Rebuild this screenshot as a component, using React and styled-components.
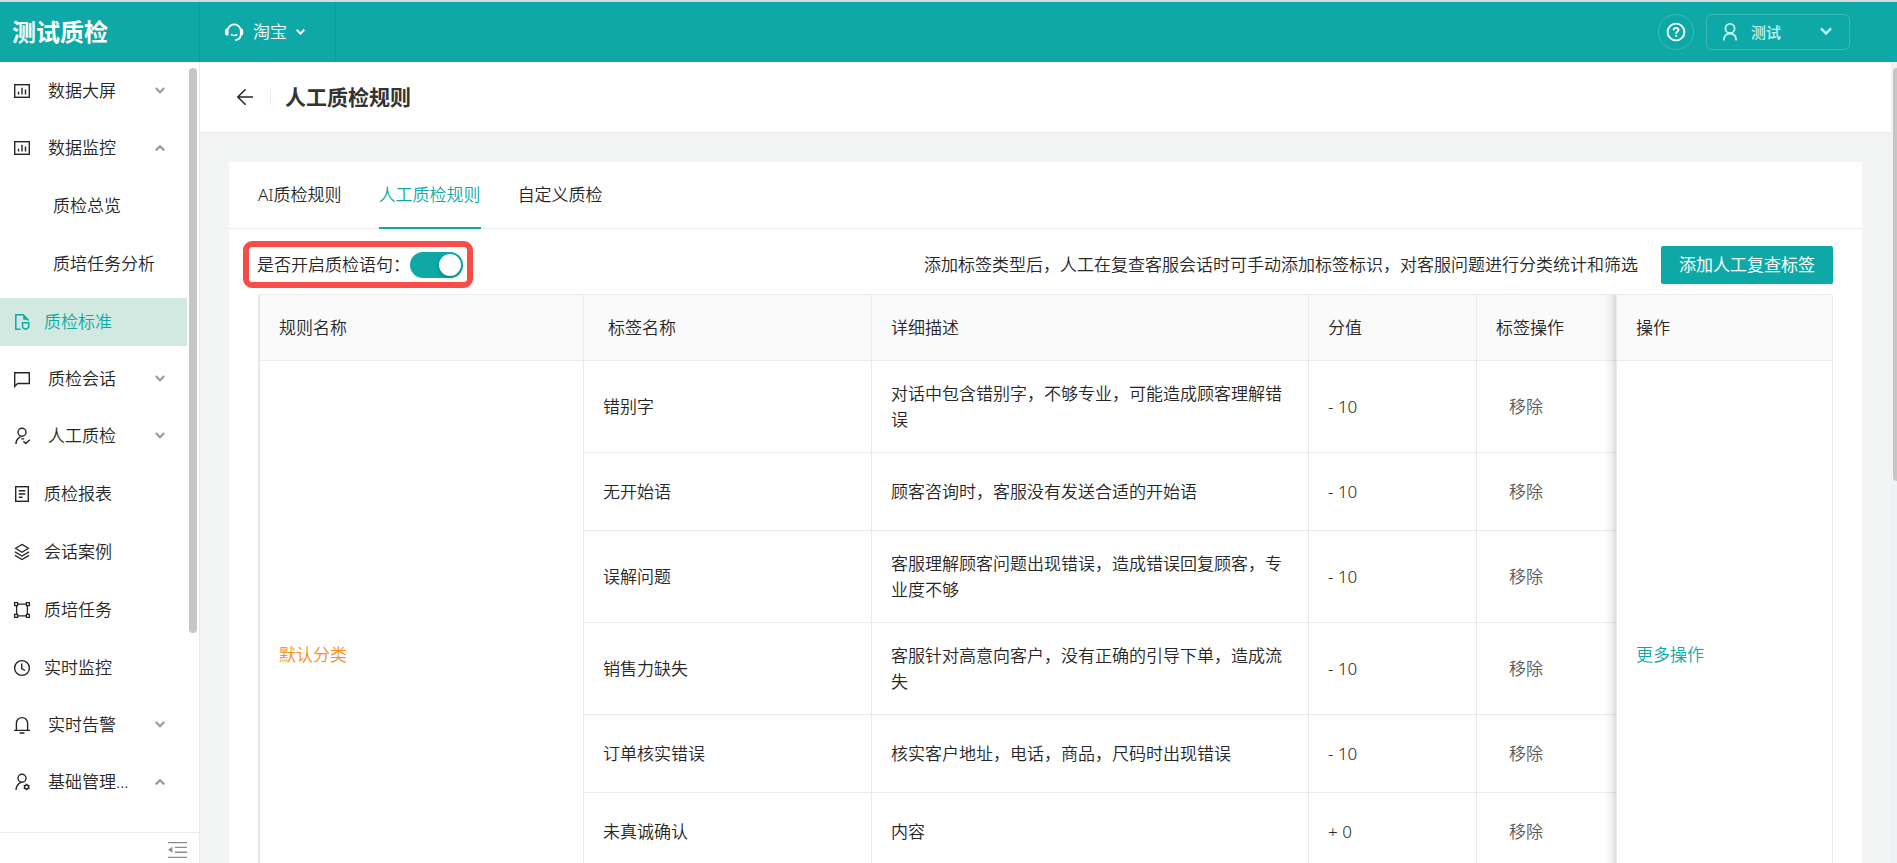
import React, { useState } from 'react';
import styled, { createGlobalStyle, css } from 'styled-components';

const colors = {
    PRIMARY: '#0ea9a7',
    PRIMARY_DARK: '#0c9c9a',
    PRIMARY_LIGHT: '#d2e9e2',
    HEADER_LINE: '#3dbab8',
    HEADER_TEXT: '#bdf5f2',
    TEXT: '#262626',
    TEXT_MUTED: '#595959',
    BORDER: '#ebebeb',
    TABLE_HEAD: '#fafafa',
    PAGE: '#f3f5f5',
    SCROLLBAR: '#c6c6c6',
    CHEVRON: '#9b9b9b',
    WARNING: '#fa8c16',
    HIGHLIGHT: '#f74c48',
    WHITE: '#ffffff',
};

const GlobalStyle = createGlobalStyle`
    *, *::before, *::after {
        box-sizing: border-box;
    }
    body {
        margin: 0;
        background: ${colors.PAGE};
        color: ${colors.TEXT};
        font-family: "Noto Sans", "Noto Sans CJK SC", sans-serif;
        font-size: 17px;
        font-weight: 350;
        line-height: 26px;
    }
    button {
        margin: 0;
        padding: 0;
        border: 0;
        background: none;
        color: inherit;
        font: inherit;
        cursor: pointer;
    }
    a {
        color: inherit;
        text-decoration: none;
    }
    svg {
        display: block;
        flex: none;
    }
`;

/* Icons */

const Svg = ({ width = 18, height = 18, stroke = 1.4, box, children }) => (
    <svg
        width={width}
        height={height}
        viewBox={box || `0 0 ${width} ${height}`}
        fill="none"
        stroke="currentColor"
        strokeWidth={stroke}
        aria-hidden="true"
    >
        {children}
    </svg>
);

const ChartIcon = () => (
    <Svg>
        <rect x="1.7" y="2.7" width="14.6" height="12.6" />
        <path d="M5.5 12.5V9.8M9 12.5V5.8M12.5 12.5V7.6" />
    </Svg>
);

const StandardIcon = () => (
    <Svg stroke={1.5}>
        <path d="M7.5 16.2H2.8V1.8h7.4l5 5v1" />
        <path d="M10.2 1.8v5h5z" fill="currentColor" stroke="none" />
        <path d="M9.5 9.8h6.2v3.6c0 1.4-1.3 2.2-3.1 2.9-1.8-.7-3.1-1.5-3.1-2.9z" />
    </Svg>
);

const ChatIcon = () => (
    <Svg>
        <path d="M1.7 16.4V2.7h14.6v10.8H4.6z" />
    </Svg>
);

const UserCheckIcon = () => (
    <Svg>
        <circle cx="9" cy="5.2" r="4" />
        <path d="M3 17c0-4 2-6 4.6-7.4M8.2 11.9h3" />
        <path d="M10.4 14.2l2.4 2.4 4-3.8" />
    </Svg>
);

const ReportIcon = () => (
    <Svg>
        <rect x="2.7" y="1.7" width="12.6" height="14.6" />
        <path d="M5.8 5.8h6.4M5.8 9h6.4M5.8 12.2h3.6" />
    </Svg>
);

const LayersIcon = () => (
    <Svg stroke={1.3}>
        <path d="M9 1.4l6.4 3.9L9 9.2 2.6 5.3z" />
        <path d="M2 8.9l7 4.1 7-4.1M2 12.4l7 4.1 7-4.1" />
    </Svg>
);

const FrameIcon = () => (
    <Svg stroke={1.3}>
        <rect x="1.6" y="1.6" width="3" height="3" />
        <rect x="13.4" y="1.6" width="3" height="3" />
        <rect x="1.6" y="13.4" width="3" height="3" />
        <rect x="13.4" y="13.4" width="3" height="3" />
        <path d="M4.6 3.1h8.8M4.6 14.9h8.8M3.6 4.6v8.8M14.4 4.6v8.8" />
    </Svg>
);

const ClockIcon = () => (
    <Svg>
        <circle cx="9" cy="9" r="7.4" />
        <path d="M8.7 4.4v5.2l3.4 1.9" />
    </Svg>
);

const BellIcon = () => (
    <Svg>
        <path d="M1 14.4h16M3.4 14.4V7.2a5.6 5.6 0 0 1 11.2 0v7.2M6.6 17h4.8" />
    </Svg>
);

const UserGearIcon = () => (
    <Svg>
        <circle cx="9" cy="5.2" r="4" />
        <path d="M3 17c0-4 2-6 5-7.6" />
        <circle cx="13.6" cy="14" r="2" />
        <path d="M13.6 10.7v1.4M13.6 15.9v1.4M10.7 12.4l1.2.6M15.3 15l1.2.6M10.7 15.6l1.2-.6M15.3 13l1.2-.6" />
    </Svg>
);

const HeadsetIcon = () => (
    <Svg width={20} height={20} stroke={1.8}>
        <path d="M3.6 13V9a6.6 6.6 0 0 1 13.2 0v3.2c0 3.4-2 5.4-5.6 6" />
        <path d="M3.9 6.6v6.8H3A2 2 0 0 1 1 11.4V8.6a2 2 0 0 1 2-2zM16.4 6.6v6.8h.8a2 2 0 0 0 2-2V8.6a2 2 0 0 0-2-2z" fill="currentColor" stroke="none" />
        <path d="M7 12.4c1.8 1.4 4.6 1.4 6.2 0" strokeWidth="1.6" />
    </Svg>
);

const HelpIcon = () => (
    <Svg width={20} height={20} stroke={1.9}>
        <circle cx="10" cy="10" r="8.4" />
        <path d="M7.6 8.2c0-1.4 1-2.3 2.5-2.3s2.4.9 2.4 2c0 1.6-2.4 1.8-2.4 3.8" />
        <path d="M10.1 12.8v2" />
    </Svg>
);

const UserIcon = () => (
    <Svg width={18} height={20} stroke={1.8}>
        <circle cx="9" cy="6.4" r="4.6" />
        <path d="M2.8 18.6c0-4.6 2.6-7 6.2-7s6.2 2.4 6.2 7" />
    </Svg>
);

const BackIcon = () => (
    <Svg width={18} height={18} stroke={1.5}>
        <path d="M17 9H2M9.6 1.2L1.8 9l7.8 7.8" />
    </Svg>
);

const FoldIcon = () => (
    <Svg width={20} height={18} stroke={1.4}>
        <path d="M1 1.6h19M8 6.4h12M8 11.2h12M1 16.4h19" />
        <path d="M1 8.8l4.4-3v6z" fill="currentColor" stroke="none" />
    </Svg>
);

const Chevron = ({ up, size = 10, stroke = 2.2 }) => (
    <Svg width={size} height={size} box="0 0 10 10" stroke={stroke}>
        <path d={up ? 'M0.8 7.4L5 3.2l4.2 4.2' : 'M0.8 2L5 6.2 9.2 2'} />
    </Svg>
);

/* Frame */

const Page = styled.div`
    display: flex;
    flex-direction: column;
    height: 100vh;
    overflow: hidden;
    border-top: 2px solid #d6dcdc;
`;

const TopBar = styled.header`
    display: flex;
    align-items: center;
    flex: none;
    height: 60px;
    padding-right: 47px;
    background: ${colors.PRIMARY};
    color: ${colors.WHITE};
`;

const Brand = styled.div`
    display: flex;
    align-items: center;
    width: 200px;
    height: 100%;
    padding-left: 12px;
    border-right: 1px solid ${colors.PRIMARY_DARK};
    font-size: 24px;
    font-weight: 700;
`;

const TenantButton = styled.button`
    display: flex;
    align-items: center;
    gap: 9px;
    width: 136px;
    height: 100%;
    padding-left: 24px;
    border-right: 1px solid ${colors.PRIMARY_DARK};
`;

const TopActions = styled.div`
    display: flex;
    gap: 12px;
    margin-left: auto;
`;

const HelpButton = styled.button`
    display: flex;
    align-items: center;
    justify-content: center;
    width: 36px;
    height: 36px;
    border: 1px solid ${colors.HEADER_LINE};
    border-radius: 50%;
`;

const UserButton = styled.button`
    display: flex;
    align-items: center;
    gap: 12px;
    width: 144px;
    height: 36px;
    padding: 0 17px 0 14px;
    border: 1px solid ${colors.HEADER_LINE};
    border-radius: 6px;
    color: ${colors.HEADER_TEXT};
    font-size: 15px;
    font-weight: 500;

    svg:last-child {
        margin-left: auto;
    }
`;

const Body = styled.div`
    display: flex;
    flex: 1;
    min-height: 0;
`;

const Rail = styled.div`
    flex: none;
    width: ${p => p.$width}px;
    padding: 6px 0 0 2px;
    background: ${p => p.$background};
    overflow: hidden;
`;

const Thumb = styled.div`
    width: 8px;
    height: ${p => p.$size}%;
    border-radius: 4px;
    background: ${colors.SCROLLBAR};
`;

/* Side menu */

const Sidebar = styled.aside`
    display: flex;
    flex-direction: column;
    flex: none;
    width: 200px;
    border-right: 1px solid ${colors.BORDER};
    background: ${colors.WHITE};
`;

const SidebarScroll = styled.div`
    display: flex;
    flex: 1;
    min-height: 0;
`;

const Menu = styled.nav`
    flex: 1;
    overflow: hidden;
    padding-bottom: 20px;
`;

const rowStyles = css`
    display: flex;
    align-items: center;
    width: 100%;
    height: 48px;
    white-space: nowrap;
    text-align: left;
`;

const MenuGroup = styled.button`
    ${rowStyles}
    gap: 17px;
    margin-top: 9px;
    padding: 0 22px 0 13px;

    &:first-child {
        margin-top: 5px;
    }
`;

const MenuLink = styled.a`
    ${rowStyles}
    gap: 13px;
    margin-top: 10px;
    padding-left: ${p => (p.$nested ? 53 : 13)}px;
    ${p => p.$active && css`
        background: ${colors.PRIMARY_LIGHT};
        color: ${colors.PRIMARY};
    `}
`;

const MenuArrow = styled.span`
    margin-left: auto;
    color: ${colors.CHEVRON};
`;

const SidebarFooter = styled.div`
    display: flex;
    justify-content: flex-end;
    align-items: flex-start;
    flex: none;
    height: 31px;
    padding: 8px 12px 0 0;
    border-top: 1px solid ${colors.BORDER};
    color: #8c8c8c;
`;

/* Content */

const Content = styled.div`
    display: flex;
    flex-direction: column;
    flex: 1;
    min-width: 0;
    overflow: hidden;
`;

const PageHeader = styled.div`
    display: flex;
    align-items: center;
    flex: none;
    height: 71px;
    padding-left: 36px;
    border-bottom: 1px solid ${colors.BORDER};
    background: ${colors.WHITE};
`;

const HeaderDivider = styled.span`
    width: 1px;
    height: 16px;
    margin: 0 14px 0 16px;
    background: ${colors.BORDER};
`;

const Title = styled.h1`
    margin: 0;
    font-size: 21px;
    font-weight: 700;
    color: #333333;
`;

const Card = styled.main`
    margin: 29px 29px 0;
    background: ${colors.WHITE};
`;

const Tabs = styled.div`
    display: flex;
    gap: 37px;
    height: 67px;
    padding: 0 29px;
    border-bottom: 1px solid ${colors.BORDER};
`;

const Tab = styled.button`
    height: 67px;
    border-bottom: 2px solid transparent;
    ${p => p.$active && css`
        border-color: ${colors.PRIMARY};
        color: ${colors.PRIMARY};
    `}
`;

const Toolbar = styled.div`
    display: flex;
    align-items: center;
    height: 65px;
    padding: 6px 29px 0 14px;
`;

const SwitchField = styled.label`
    display: flex;
    align-items: center;
    height: 47px;
    padding: 0 4px 0 8px;
    border: 6px solid ${colors.HIGHLIGHT};
    border-radius: 9px;
    white-space: nowrap;
`;

const Switch = styled.input`
    display: flex;
    align-items: center;
    width: 53px;
    height: 26px;
    margin: 0;
    padding: 2px;
    appearance: none;
    border-radius: 13px;
    background: ${p => (p.checked ? colors.PRIMARY : '#bfbfbf')};
    justify-content: ${p => (p.checked ? 'flex-end' : 'flex-start')};
    cursor: pointer;

    &::before {
        content: '';
        width: 22px;
        height: 22px;
        border-radius: 50%;
        background: ${colors.WHITE};
        box-shadow: 0 2px 4px rgba(0, 35, 11, 0.3);
    }
`;

const Hint = styled.p`
    margin: 0 23px 0 auto;
    white-space: nowrap;
`;

const PrimaryButton = styled.button`
    height: 38px;
    padding: 0 18px;
    border-radius: 2px;
    background: ${colors.PRIMARY};
    box-shadow: 0 2px 2px rgba(0, 0, 0, 0.05);
    color: ${colors.WHITE};
    font-weight: 400;
    white-space: nowrap;
`;

const TableWrap = styled.div`
    margin: 0 29px;
    border-top: 1px solid ${colors.BORDER};
    border-left: 2px solid #e6e6e6;
    border-radius: 2px 2px 0 0;
    overflow: hidden;
`;

const Table = styled.table`
    width: 100%;
    table-layout: fixed;
    border-collapse: separate;
    border-spacing: 0;
`;

const Col = styled.col`
    width: ${p => (p.$width ? `${p.$width}px` : 'auto')};
`;

const cellStyles = css`
    padding: 20px 19px 19px;
    border-right: 1px solid ${colors.BORDER};
    border-bottom: 1px solid ${colors.BORDER};
    text-align: left;
    vertical-align: middle;
`;

const pinnedStyles = css`
    position: relative;

    &::before {
        content: '';
        position: absolute;
        top: 0;
        bottom: -1px;
        left: -13px;
        width: 12px;
        background: linear-gradient(to left, rgba(0, 0, 0, 0.13), rgba(0, 0, 0, 0.04) 50%, transparent);
    }
`;

const HeadCell = styled.th`
    ${cellStyles}
    padding-left: ${p => (p.$indent ? 24 : 19)}px;
    background: ${colors.TABLE_HEAD};
    font-weight: inherit;
    ${p => p.$pinned && pinnedStyles}
`;

const Cell = styled.td`
    ${cellStyles}
    ${p => p.$pinned && pinnedStyles}
`;

const CategoryLink = styled.a`
    color: ${colors.WARNING};
`;

const MoreButton = styled.button`
    color: ${colors.PRIMARY};
`;

const ActionBox = styled.div`
    display: flex;
    align-items: center;
    height: 38px;
`;

const RemoveButton = styled.button`
    height: 38px;
    padding: 0 13px;
    color: ${colors.TEXT_MUTED};
`;

const menu = [
    { label: '数据大屏', icon: ChartIcon, group: true },
    { label: '数据监控', icon: ChartIcon, group: true, open: true },
    { label: '质检总览', nested: true },
    { label: '质培任务分析', nested: true },
    { label: '质检标准', icon: StandardIcon, active: true },
    { label: '质检会话', icon: ChatIcon, group: true },
    { label: '人工质检', icon: UserCheckIcon, group: true },
    { label: '质检报表', icon: ReportIcon },
    { label: '会话案例', icon: LayersIcon },
    { label: '质培任务', icon: FrameIcon },
    { label: '实时监控', icon: ClockIcon },
    { label: '实时告警', icon: BellIcon, group: true },
    { label: '基础管理...', icon: UserGearIcon, group: true, open: true },
];

const tabs = ['AI质检规则', '人工质检规则', '自定义质检'];

const rules = [
    { name: '错别字', detail: '对话中包含错别字，不够专业，可能造成顾客理解错误', score: '- 10' },
    { name: '无开始语', detail: '顾客咨询时，客服没有发送合适的开始语', score: '- 10' },
    { name: '误解问题', detail: '客服理解顾客问题出现错误，造成错误回复顾客，专业度不够', score: '- 10' },
    { name: '销售力缺失', detail: '客服针对高意向客户，没有正确的引导下单，造成流失', score: '- 10' },
    { name: '订单核实错误', detail: '核实客户地址，电话，商品，尺码时出现错误', score: '- 10' },
    { name: '未真诚确认', detail: '内容', score: '+ 0' },
    { name: '', detail: '', score: '' },
];

const MenuItem = ({ item }) => {
    const Icon = item.icon;
    if (item.group) {
        return (
            <MenuGroup type="button" aria-expanded={!!item.open}>
                <Icon />
                {item.label}
                <MenuArrow><Chevron up={item.open} /></MenuArrow>
            </MenuGroup>
        );
    }
    return (
        <MenuLink href="#" $nested={item.nested} $active={item.active}>
            {Icon && <Icon />}
            {item.label}
        </MenuLink>
    );
};

const RuleTable = () => (
    <TableWrap>
        <Table>
            <colgroup>
                <Col $width={324} />
                <Col $width={288} />
                <Col />
                <Col $width={168} />
                <Col $width={140} />
                <Col $width={216} />
            </colgroup>
            <thead>
                <tr>
                    <HeadCell>规则名称</HeadCell>
                    <HeadCell $indent>标签名称</HeadCell>
                    <HeadCell>详细描述</HeadCell>
                    <HeadCell>分值</HeadCell>
                    <HeadCell>标签操作</HeadCell>
                    <HeadCell $pinned>操作</HeadCell>
                </tr>
            </thead>
            <tbody>
                {rules.map((rule, index) => (
                    <tr key={rule.name}>
                        {index === 0 && (
                            <Cell rowSpan={rules.length}>
                                <CategoryLink href="#">默认分类</CategoryLink>
                            </Cell>
                        )}
                        <Cell>{rule.name}</Cell>
                        <Cell>{rule.detail}</Cell>
                        <Cell>{rule.score}</Cell>
                        <Cell>
                            <ActionBox>
                                {rule.name && <RemoveButton type="button">移除</RemoveButton>}
                            </ActionBox>
                        </Cell>
                        {index === 0 && (
                            <Cell rowSpan={rules.length} $pinned>
                                <MoreButton type="button">更多操作</MoreButton>
                            </Cell>
                        )}
                    </tr>
                ))}
            </tbody>
        </Table>
    </TableWrap>
);

const App = () => {
    const [activeTab, setActiveTab] = useState(1);
    const [enabled, setEnabled] = useState(true);

    return (
        <Page>
            <GlobalStyle />
            <TopBar>
                <Brand>测试质检</Brand>
                <TenantButton type="button">
                    <HeadsetIcon />
                    淘宝
                    <Chevron size={9} />
                </TenantButton>
                <TopActions>
                    <HelpButton type="button" aria-label="帮助"><HelpIcon /></HelpButton>
                    <UserButton type="button">
                        <UserIcon />
                        测试
                        <Chevron size={12} stroke={2} />
                    </UserButton>
                </TopActions>
            </TopBar>
            <Body>
                <Sidebar>
                    <SidebarScroll>
                        <Menu>
                            {menu.map(item => <MenuItem key={item.label} item={item} />)}
                        </Menu>
                        <Rail $width={12} $background={colors.WHITE}>
                            <Thumb $size={74} />
                        </Rail>
                    </SidebarScroll>
                    <SidebarFooter>
                        <button type="button" aria-label="收起菜单"><FoldIcon /></button>
                    </SidebarFooter>
                </Sidebar>
                <Content>
                    <PageHeader>
                        <button type="button" aria-label="返回"><BackIcon /></button>
                        <HeaderDivider />
                        <Title>人工质检规则</Title>
                    </PageHeader>
                    <Card>
                        <Tabs>
                            {tabs.map((tab, index) => (
                                <Tab
                                    key={tab}
                                    type="button"
                                    $active={index === activeTab}
                                    onClick={() => setActiveTab(index)}
                                >
                                    {tab}
                                </Tab>
                            ))}
                        </Tabs>
                        <Toolbar>
                            <SwitchField>
                                是否开启质检语句：
                                <Switch
                                    type="checkbox"
                                    role="switch"
                                    checked={enabled}
                                    onChange={() => setEnabled(!enabled)}
                                />
                            </SwitchField>
                            <Hint>添加标签类型后，人工在复查客服会话时可手动添加标签标识，对客服问题进行分类统计和筛选</Hint>
                            <PrimaryButton type="button">添加人工复查标签</PrimaryButton>
                        </Toolbar>
                        <RuleTable />
                    </Card>
                </Content>
                <Rail $width={6} $background="#f0f1f5">
                    <Thumb $size={52} />
                </Rail>
            </Body>
        </Page>
    );
};

export default App;
